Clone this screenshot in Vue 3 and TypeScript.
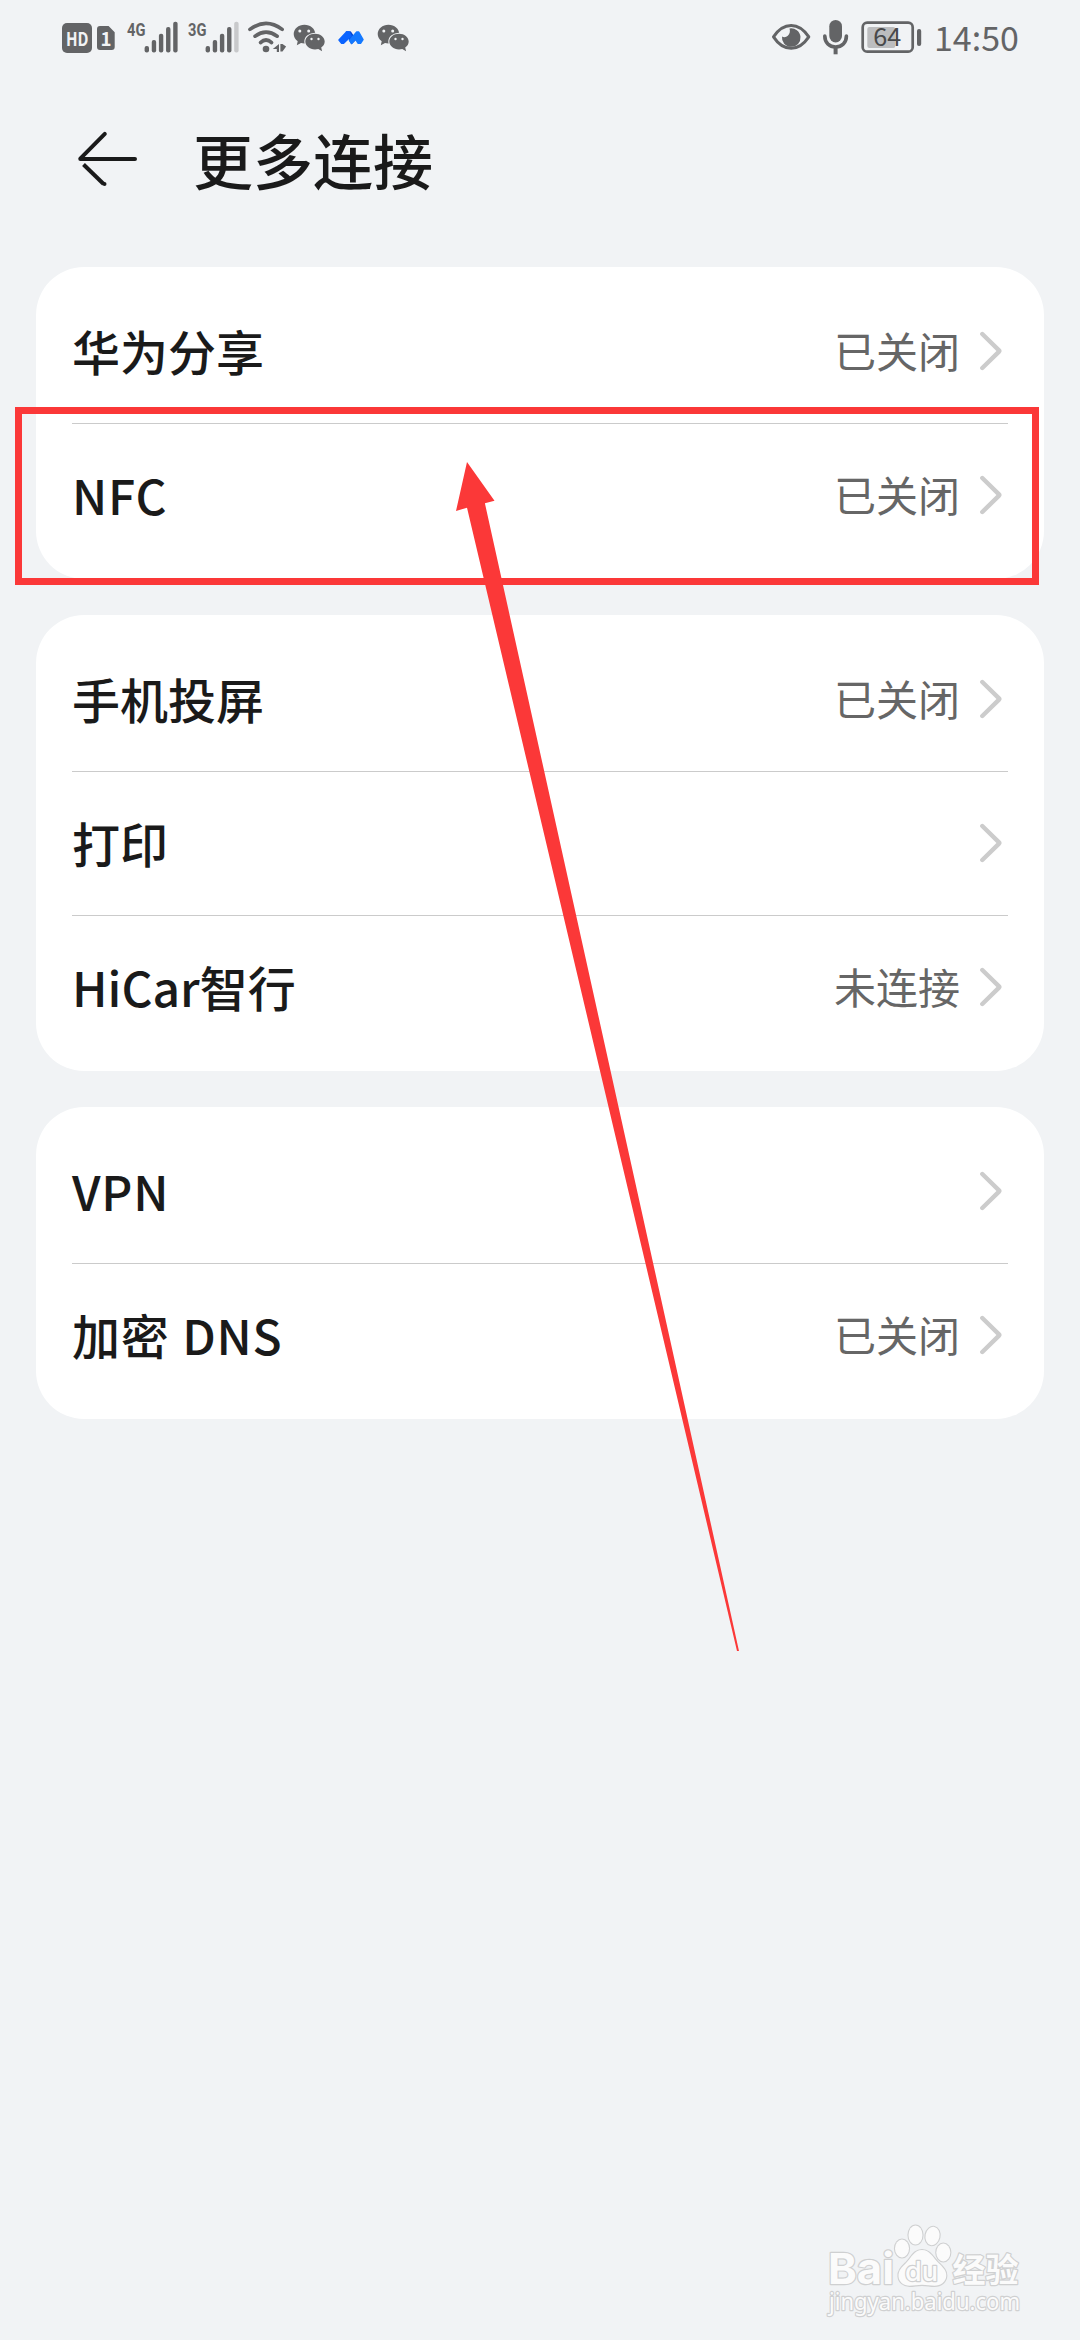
<script setup lang="ts">
interface Item {
  label: string
  value?: string
  spaced?: boolean
}

const groups: Item[][] = [
  [
    { label: '华为分享', value: '已关闭' },
    { label: 'NFC', value: '已关闭', spaced: true },
  ],
  [
    { label: '手机投屏', value: '已关闭' },
    { label: '打印' },
    { label: 'HiCar智行', value: '未连接' },
  ],
  [
    { label: 'VPN', spaced: true },
    { label: '加密 DNS', value: '已关闭', spaced: true },
  ],
]

const signals = [
  { name: '4G', weak: false },
  { name: '3G', weak: true },
]
const barTops = [46, 40, 33.7, 27, 21.7]
</script>

<template>
  <div class="screen">
    <header class="status">
      <div class="status-left">
        <svg width="65" height="76" viewBox="60 0 65 76">
          <rect x="62" y="23" width="30" height="30" rx="5" class="ink" />
          <text x="66" y="45.6" class="hd" textLength="22.5" lengthAdjust="spacingAndGlyphs">HD</text>
          <path class="ink" d="M100 26h8.600l6.100 6.200V47a3 3 0 0 1-3 3H100a3 3 0 0 1-3-3V29a3 3 0 0 1 3-3z" />
          <text x="100.600" y="45.6" class="hd">1</text>
        </svg>
        <svg v-for="s in signals" :key="s.name" width="61" height="76" viewBox="125 0 61 76">
          <text x="127" y="35.6" class="net" textLength="18.400" lengthAdjust="spacingAndGlyphs">{{ s.name }}</text>
          <rect
            v-for="(top, i) in barTops"
            :key="i"
            :x="144.6 + i * 7.15"
            :y="top"
            width="4.400"
            :height="52.4 - top"
            rx="2"
            :class="s.weak && i === 4 ? 'faint' : 'ink'"
          />
        </svg>
        <svg width="44" height="76" viewBox="247 0 44 76">
          <g class="line" stroke-width="3.600">
            <path d="M249.900 29.400Q266 17.400 282.200 29.400" />
            <path d="M255 36.200Q266 28.200 277.200 36.200" />
            <path d="M260.500 42.600Q266 37.400 271.600 42.600" />
          </g>
          <circle cx="266" cy="49" r="3.300" class="ink" />
          <path class="ink" d="M279 44v8h-2.200v-3h-4zM280.400 44h2.100l3.600 2.400-3.600 5.200h-2.100z" />
        </svg>
        <svg v-for="n in 2" :key="n" :class="{ second: n === 2 }" width="38" height="76" viewBox="291 0 38 76">
          <path class="ink" d="M304.400 24.700c6 0 10.900 4.100 10.900 9.300s-4.900 9.400-10.900 9.400c-1.200 0-2.300-.2-3.400-.5l-4.200 2.400.9-4.100c-2.500-1.700-4-4.300-4-7.200 0-5.200 4.800-9.300 10.700-9.300z" />
          <path class="ink halo" d="M315 33.800c5.400 0 9.700 3.500 9.700 7.800 0 2.500-1.300 4.600-3.500 6l.9 3.600-3.800-2.200c-1 .3-2.100.4-3.300.4-5.400 0-9.700-3.500-9.700-7.800s4.300-7.800 9.700-7.800z" />
          <g fill="#f1f3f5">
            <circle cx="299.800" cy="31" r="1.500" />
            <circle cx="308.700" cy="31" r="1.500" />
            <circle cx="311.500" cy="39" r="1.200" />
            <circle cx="318.500" cy="39" r="1.200" />
          </g>
        </svg>
        <svg class="meeting" width="30" height="76" viewBox="336 0 30 76">
          <g stroke-width="1.500" stroke-linejoin="round">
            <path d="M346.500 32h3.800l5.200 7.500-4 4z" fill="#0047d6" stroke="#0047d6" />
            <path d="M339 40l7.500-8h2.500l2.200 4-7.600 7.300h-2z" fill="#0a63ff" stroke="#0a63ff" />
            <path d="M349.500 40.500l7.200-8.500h2l4.300 7.500-2.500 3.800h-2.300l-2.700-4.300-3.800 4.300z" fill="#1479ff" stroke="#1479ff" />
          </g>
        </svg>
      </div>
      <div class="status-right">
        <svg width="48" height="76" viewBox="768 0 48 76">
          <path class="line" stroke-width="3" d="M773.500 36.900C778 30 784 25.500 791.200 25.500s13 4.500 17.600 11.400c-4.600 6.900-10.400 11.400-17.600 11.400s-13.200-4.500-17.700-11.400z" />
          <path class="ink" d="M789.500 28.400a9.300 9.300 0 1 1-7.500 8c1.500 1.100 4.200 1 5.800-.6 2-1.900 2.600-4.900 1.700-7.400z" />
        </svg>
        <svg width="40" height="76" viewBox="816 0 40 76">
          <rect x="829.300" y="20" width="12.700" height="22.400" rx="6.350" class="ink" />
          <path class="line" stroke-width="3.600" d="M824.800 36c0 6.600 4.500 11 10.800 11s10.800-4.400 10.800-11" />
          <path d="M835.600 47v7.300" stroke="#636466" stroke-width="4" />
        </svg>
        <svg width="70" height="76" viewBox="856 0 70 76">
          <rect x="862.700" y="22.700" width="50" height="29" rx="4.500" class="line" stroke-width="2.700" />
          <rect x="867.300" y="27" width="28" height="21" rx="2" fill="#bcbdbf" />
          <rect x="917" y="29" width="4.200" height="17" rx="2" class="ink" />
          <text x="873.300" y="46" class="percent" textLength="28" lengthAdjust="spacingAndGlyphs">64</text>
        </svg>
        <span class="time">14:50</span>
      </div>
    </header>

    <div class="title-bar">
      <svg class="back" width="64" height="60" viewBox="76 129 64 60">
        <path fill="none" stroke="#1a1a1a" stroke-width="4" stroke-linecap="round" stroke-linejoin="round" d="M104.800 133.800L80.300 158.600V159H135" />
        <path fill="none" stroke="#1a1a1a" stroke-width="4" d="M83.500 164.500L103.600 184" />
        <circle cx="104.500" cy="184" r="2" fill="#1a1a1a" />
      </svg>
      <h1>更多连接</h1>
    </div>

    <main class="groups">
      <section v-for="(group, g) in groups" :key="g" class="card">
        <div v-for="item in group" :key="item.label" class="row">
          <span class="label" :class="{ spaced: item.spaced }">{{ item.label }}</span>
          <span class="value">{{ item.value }}</span>
          <svg class="chevron" width="24" height="42" viewBox="0 0 24 42">
            <path d="M4.300 4L21 20.400q.6.600 0 1.200L4.300 38" />
          </svg>
        </div>
      </section>
    </main>

    <div class="highlight"></div>
    <svg class="arrow" width="290" height="1196" viewBox="453 459 290 1196">
      <path fill="#fb3838" d="M467 462L494.500 500.700 484.900 503.300 739 1651H737L467 507.700 456 511z" />
    </svg>

    <svg class="watermark" width="210" height="106" viewBox="820 2216 210 106">
      <g class="mark">
        <text x="828" y="2284" font-size="43" textLength="66" lengthAdjust="spacingAndGlyphs" class="bai">Bai</text>
        <ellipse cx="902" cy="2248.500" rx="7" ry="9" />
        <ellipse cx="915.500" cy="2235" rx="7" ry="9.500" />
        <ellipse cx="932.500" cy="2236" rx="7" ry="9.200" transform="rotate(12 932.500 2236)" />
        <ellipse cx="943.300" cy="2252.500" rx="7" ry="9" />
        <path d="M922 2250c-8 0-10.500 7.500-15.500 12.500-4.500 4.500-8.500 8-8 14 .5 5.500 5 9.300 11 9.300 4.500 0 8-1 12.500-1s8 1 12.500 1c6.500 0 11.500-4 11.800-10 .3-5.500-4-9-8.300-13.300-5-5-8-12.500-16-12.500z" />
        <text x="905" y="2280.500" font-size="27" textLength="33" lengthAdjust="spacingAndGlyphs" class="du">du</text>
        <text x="952.500" y="2282" font-size="33" textLength="66" class="cn">经验</text>
        <text x="829" y="2310" font-size="23" textLength="191" lengthAdjust="spacingAndGlyphs" class="url">jingyan.baidu.com</text>
      </g>
    </svg>
  </div>
</template>

<style>
body {
  background: #f1f3f5;
}
</style>

<style scoped>
.screen {
  position: relative;
  width: 1080px;
  height: 2340px;
  overflow: hidden;
  background: #f1f3f5;
  color: #1a1a1a;
  font-family: 'Noto Sans CJK SC', sans-serif;
}
svg {
  display: block;
  flex: none;
}
.status {
  display: flex;
  justify-content: space-between;
  height: 76px;
  padding: 0 58px 0 60px;
}
.status-left,
.status-right {
  display: flex;
}
.second {
  order: 2;
  margin-left: 9px;
}
.meeting {
  order: 1;
  margin-left: 7px;
}
.ink {
  fill: #636466;
}
.faint {
  fill: #c8c9cb;
}
.line {
  fill: none;
  stroke: #636466;
  stroke-linecap: round;
  stroke-linejoin: round;
}
.halo {
  stroke: #f1f3f5;
  stroke-width: 2;
  paint-order: stroke;
}
.hd {
  fill: #f1f3f5;
  font: 700 18.700px 'Noto Sans CJK SC', sans-serif;
}
.net {
  fill: #636466;
  font: 700 18.500px Roboto, sans-serif;
}
.percent {
  fill: #48494b;
  font: 400 24.500px 'Noto Sans CJK SC', sans-serif;
}
.time {
  width: 88px;
  margin-left: 8px;
  line-height: 74px;
  font-size: 34px;
  color: #636466;
  white-space: nowrap;
}
.title-bar {
  display: flex;
  align-items: center;
  height: 168px;
  padding-left: 76px;
}
.back {
  margin-top: -2px;
}
h1 {
  margin: 0 0 2px 53px;
  font-size: 60px;
  line-height: 88px;
  font-weight: 500;
}
.groups {
  display: flex;
  flex-direction: column;
  gap: 36px;
  padding: 23px 36px 0;
}
.card {
  padding: 12px 36px;
  border-radius: 48px;
  background: #fff;
}
.row {
  display: flex;
  align-items: center;
  box-sizing: border-box;
  height: 144px;
}
.row + .row {
  padding-bottom: 1px;
  border-top: 1px solid #cbcbcb;
}
.label {
  flex: 1;
  padding-bottom: 3px;
  font-size: 48px;
  line-height: 70px;
  font-weight: 500;
}
.spaced {
  letter-spacing: 0.800px;
  word-spacing: 1px;
}
.value {
  padding-bottom: 2px;
  font-size: 42px;
  line-height: 62px;
  color: #666;
}
.chevron {
  margin: 0 6px 0 18px;
}
.chevron path {
  fill: none;
  stroke: #ccc;
  stroke-width: 4.400;
  stroke-linecap: round;
  stroke-linejoin: round;
}
.highlight {
  position: absolute;
  left: 15px;
  top: 407px;
  box-sizing: border-box;
  width: 1024px;
  height: 178px;
  border: 7px solid #fb3838;
}
.arrow {
  position: absolute;
  left: 453px;
  top: 459px;
}
.watermark {
  position: absolute;
  left: 820px;
  top: 2216px;
}
.mark {
  fill: #fbfbfb;
  stroke: #cfd0d1;
  stroke-width: 2.400;
  stroke-linejoin: round;
  paint-order: stroke;
}
.mark ellipse,
.mark path {
  stroke-width: 2.200;
}
.bai,
.du {
  font-family: Inter, sans-serif;
  font-weight: 700;
}
.du {
  font-weight: 500;
}
.cn {
  font-weight: 700;
}
.url {
  font-family: 'Noto Sans', sans-serif;
}
</style>
